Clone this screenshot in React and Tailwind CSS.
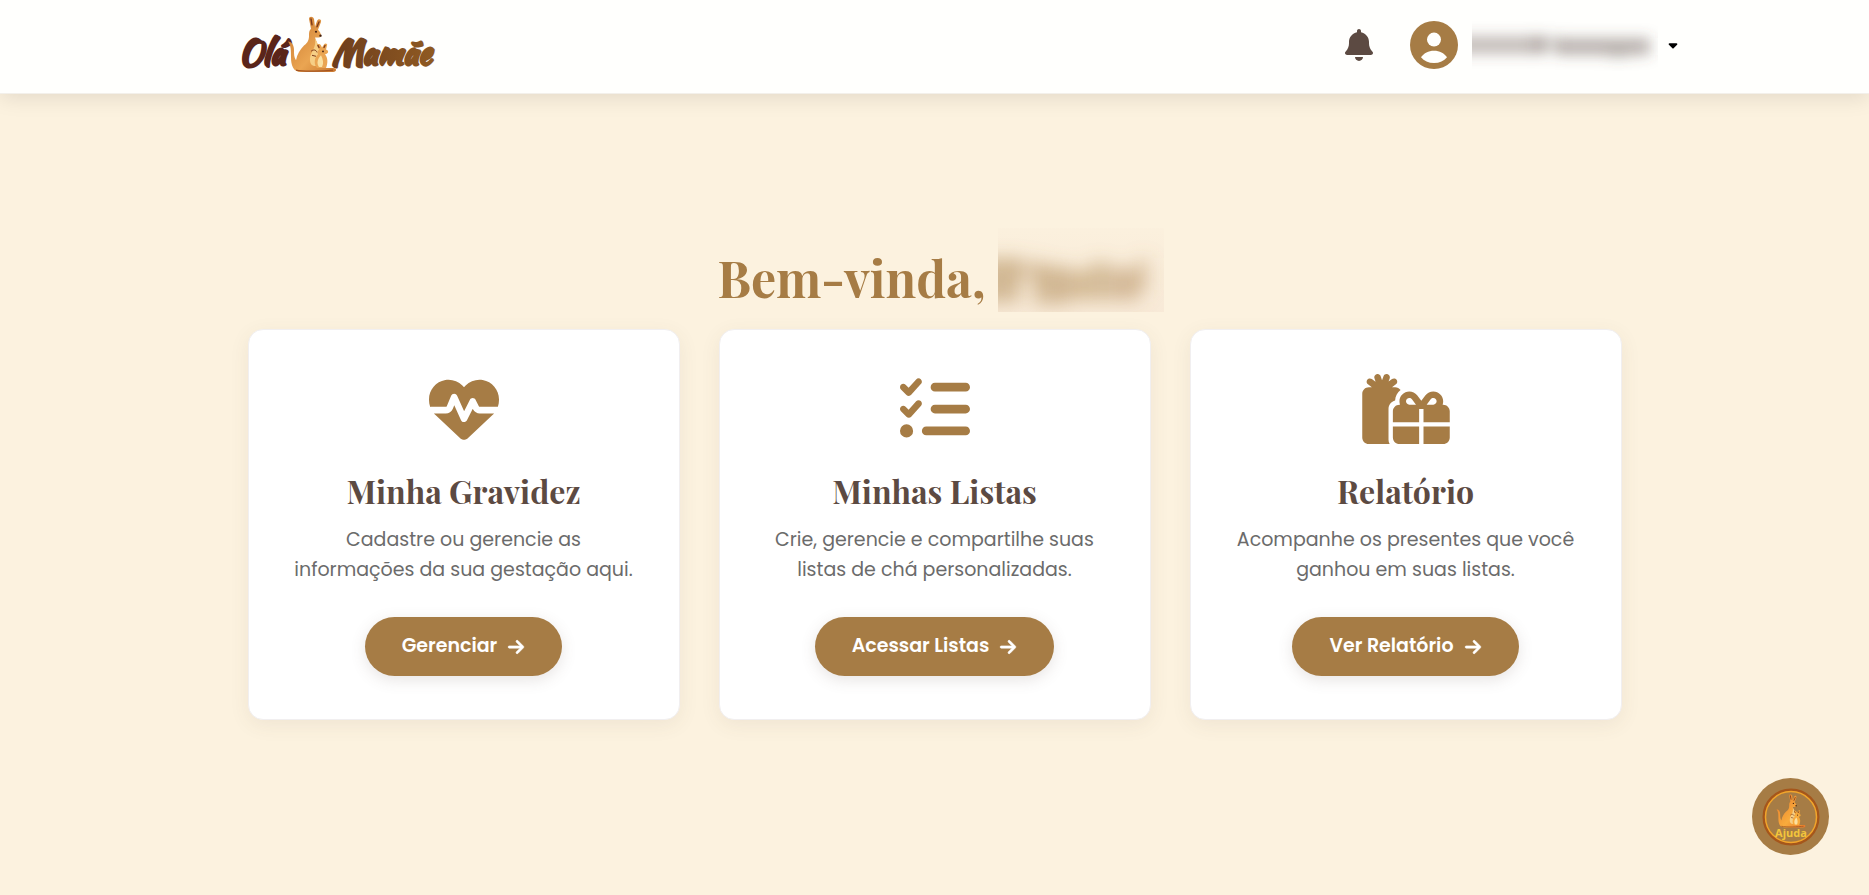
import { FaArrowRight, FaBell, FaCaretDown, FaGifts, FaHeartPulse, FaListCheck } from "react-icons/fa6";

const cards = [
  {
    icon: FaHeartPulse,
    iconWidth: "w-[70px]",
    title: "Minha Gravidez",
    text: "Cadastre ou gerencie as informações da sua gestação aqui.",
    action: "Gerenciar",
  },
  {
    icon: FaListCheck,
    iconWidth: "w-[70px]",
    title: "Minhas Listas",
    text: "Crie, gerencie e compartilhe suas listas de chá personalizadas.",
    action: "Acessar Listas",
  },
  {
    icon: FaGifts,
    iconWidth: "w-[88px]",
    title: "Relatório",
    text: "Acompanhe os presentes que você ganhou em suas listas.",
    action: "Ver Relatório",
  },
];

function Kangaroo({ id, light, dark, ...box }) {
  return (
    <svg {...box} viewBox="0 0 50 58" preserveAspectRatio="none">
      <defs>
        <linearGradient id={id} x1="0" x2="1" y1="0" y2="1">
          <stop offset="0" stopColor={dark} />
          <stop offset=".6" stopColor={light} />
          <stop offset="1" stopColor={dark} />
        </linearGradient>
      </defs>
      <path d="M1 26c4 0 6 4 6 9 0 4 0 7 2 10 1-6 4-11 8-15 4-3 5-6 5-10 0-3 0-5 2-7L22 3c0-3 4-3 5 0l1 8 2-6c1-3 5-2 4 1l-3 8c2 2 3 4 3 6 0 2-3 2-6 2 1 3 3 7 4 11l2 10 1 10h11c4 0 4 4 0 4H14C6 57 4 50 4 42 4 35 4 30 1 26Z" fill={`url(#${id})`} />
      <path d="M28 23c3 5 5 12 5 19 0 5-2 9-6 9-5-1-5-9-2-14 2-4 4-8 3-14Z" fill="#f6cf86" />
      <path d="M32 34l-2-4c0-2 3-2 4 0l1 2 2-3c1-2 4-1 3 1l-1 4c3 1 3 4-1 5 3 4 3 9 1 14h-9c-4-5-2-11 1-14-1-2 0-4 1-5Z" fill={light} />
      <path d="M34 40c2 4 3 8 1 12h-3c-3-4-1-9 2-12Z" fill="#fae0a0" />
      <path d="M24 3l1 6M32 6l-2 5M38 30l-1 2M31 30l1 2" stroke="#7c3a1b" strokeWidth="1.4" strokeLinecap="round" />
      <circle cx="29" cy="16" r="1.100" fill="#43200f" />
      <circle cx="33.500" cy="20" r="1.200" fill="#43200f" />
      <circle cx="36" cy="36" r=".9" fill="#43200f" />
      <path d="M24 36c2-2 5-2 6 1M25 40l4 1" stroke="#7c3a1b" fill="none" />
      <path d="M9 55c8 2 28 1 37 0" stroke="#a35422" strokeWidth="1.300" fill="none" />
    </svg>
  );
}

function Logo() {
  return (
    <svg width="196" height="60" viewBox="0 0 196 60" role="img" aria-label="Olá Mamãe">
      <defs>
        <linearGradient id="mamae" x1="0" x2="1">
          <stop offset="0" stopColor="#6d3d1c" />
          <stop offset="1" stopColor="#8f5a22" />
        </linearGradient>
      </defs>
      <g strokeWidth="3" strokeLinejoin="round" className="font-['Kaushan_Script','Lato',sans-serif] text-[33px]">
        <text x="-1" y="49" fill="#5a251a" stroke="#5a251a">Olá</text>
        <text x="92" y="49" fill="url(#mamae)" stroke="url(#mamae)">Mamãe</text>
      </g>
      <Kangaroo id="kangaroo-logo" light="#eaa552" dark="#c8762c" x="47" y="1" width="50" height="57" />
    </svg>
  );
}

function BlurredName() {
  return (
    <svg width="186" height="52" viewBox="0 0 186 52" aria-hidden="true">
      <defs>
        <filter id="name-blur" x="-20%" y="-100%" width="140%" height="300%">
          <feGaussianBlur stdDeviation="7" />
        </filter>
      </defs>
      <g filter="url(#name-blur)" fill="#5b4a42">
        <rect x="-16" y="17" width="90" height="18" opacity=".36" />
        <rect x="60" y="17" width="28" height="16" opacity=".2" />
        <rect x="84" y="19" width="94" height="17" opacity=".42" />
        <rect x="136" y="31" width="20" height="9" opacity=".15" />
      </g>
    </svg>
  );
}

function BlurredHeadingName() {
  return (
    <svg width="166" height="84" viewBox="0 0 166 84" aria-hidden="true">
      <defs>
        <filter id="heading-blur" x="-20%" y="-60%" width="140%" height="220%">
          <feGaussianBlur stdDeviation="9" />
        </filter>
        <linearGradient id="heading-haze" x1="0" x2="0" y1="0" y2="1">
          <stop offset="0" stopColor="#f6e6d4" stopOpacity=".15" />
          <stop offset="1" stopColor="#f6e6d4" stopOpacity=".7" />
        </linearGradient>
      </defs>
      <rect width="166" height="84" fill="url(#heading-haze)" />
      <g filter="url(#heading-blur)" fill="#a67c45">
        <rect x="-18" y="30" width="40" height="44" opacity=".46" />
        <rect x="14" y="32" width="32" height="20" opacity=".26" />
        <rect x="36" y="38" width="34" height="38" opacity=".46" />
        <rect x="68" y="42" width="26" height="30" opacity=".42" />
        <rect x="92" y="34" width="20" height="38" opacity=".4" />
        <rect x="112" y="40" width="30" height="32" opacity=".44" />
        <rect x="138" y="30" width="14" height="32" opacity=".25" />
      </g>
    </svg>
  );
}

function Avatar() {
  return (
    <svg width="48" height="48" viewBox="0 0 48 48" aria-hidden="true">
      <circle cx="24" cy="24" r="24" fill="#a67c45" />
      <circle cx="24" cy="18.6" r="7" fill="#fffffd" />
      <path d="M11 36.2C14.2 32 18.2 29.8 24 29.8s9.800 2.200 13 6.400C34 40 29.500 42 24 42s-10-2-13-5.800Z" fill="#fffffd" />
    </svg>
  );
}

function Card({ icon: Icon, iconWidth, title, text, action }) {
  return (
    <article className="flex flex-col items-center rounded-[15px] border border-[#f1eff0] bg-white px-11 pt-11 pb-[43px] text-center shadow-[0_5px_20px_rgba(92,74,66,0.08)]">
      <Icon className={`h-[70px] text-[#a67c45] ${iconWidth}`} aria-hidden="true" />
      <h2 className="mt-[27px] font-['Playfair_Display','Liberation_Serif',serif] text-[32px] leading-10 font-bold text-[#5c4a42]">
        {title}
      </h2>
      <p className="mt-[14px] mb-8 text-[19px] leading-[30px] text-[#6b6b6b]">{text}</p>
      <a
        href="#"
        className="mt-auto flex h-[59px] items-center gap-[10px] rounded-full bg-[#a67c45] px-[37px] text-[19px] font-semibold whitespace-nowrap text-white shadow-[0_4px_15px_rgba(92,74,66,0.15)]"
      >
        {action}
        <FaArrowRight className="size-[18px] stroke-white stroke-[16px]" aria-hidden="true" />
      </a>
    </article>
  );
}

export default function App() {
  return (
    <div className="flex min-h-screen flex-col bg-[#fcf2df] font-['Poppins','Inter',sans-serif]">
      <header className="relative border-b border-[#f3f0ea] bg-[#fffffd] shadow-[0_4px_20px_rgba(0,0,0,0.1)]">
        <div className="mx-auto flex h-[93px] max-w-[1490px] items-center justify-between pb-1 pl-[50px]">
          <a href="#">
            <Logo />
          </a>
          <div className="flex items-center">
            <button type="button" aria-label="Notificações" className="mr-[37px] text-[#5c4a42]">
              <FaBell className="h-8 w-7" />
            </button>
            <button type="button" aria-label="Menu da conta" className="flex items-center text-black">
              <Avatar />
              <span className="ml-[14px]">
                <BlurredName />
              </span>
              <FaCaretDown className="ml-2 size-[14px]" />
            </button>
          </div>
        </div>
      </header>

      <main className="mx-auto w-full max-w-[1374px] pt-[134px] pb-16">
        <h1 className="flex items-end justify-center gap-3 pl-3 font-['Playfair_Display','Liberation_Serif',serif] text-[50px] leading-[68px] font-bold text-[#a67c45]">
          Bem-vinda,
          <BlurredHeadingName />
        </h1>
        <div className="mt-[17px] grid grid-cols-3 gap-[39px]">
          {cards.map((card) => (
            <Card key={card.title} {...card} />
          ))}
        </div>
      </main>

      <button
        type="button"
        aria-label="Ajuda"
        className="fixed right-10 bottom-10 flex size-[77px] items-center justify-center rounded-full bg-[#a67c45]"
      >
        <svg width="58" height="58" viewBox="0 0 58 58" aria-hidden="true">
          <circle cx="29" cy="29" r="27" fill="none" stroke="#a5561b" strokeWidth="3" />
          <circle cx="29" cy="29" r="25.500" fill="none" stroke="#f2a52b" strokeWidth="1.500" />
          <Kangaroo id="kangaroo-help" light="#f8ab3c" dark="#e8792a" x="14" y="6" width="30" height="34" />
          <text x="29" y="49" textAnchor="middle" fill="#f3c53b" className="font-['Open_Sans',sans-serif] text-[11px] font-bold">Ajuda</text>
        </svg>
      </button>
    </div>
  );
}
